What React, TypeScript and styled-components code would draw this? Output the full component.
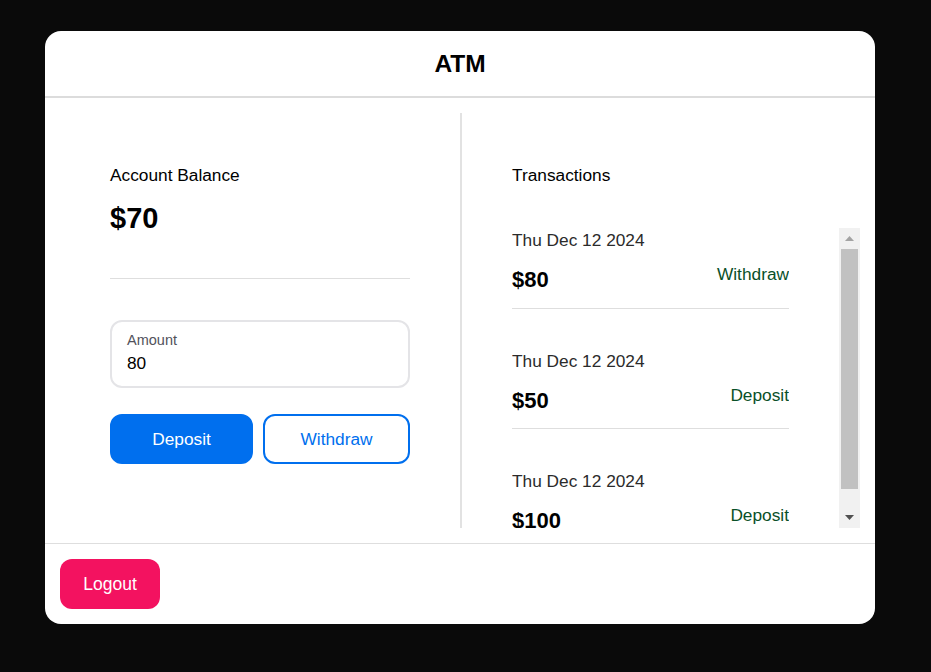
import React from "react";
import styled, { createGlobalStyle } from "styled-components";

const Global = createGlobalStyle`
  html, body { margin: 0; padding: 0; background: #0a0a0a; }
  body { font-family: "Liberation Sans", Arial, sans-serif; color: #000; }
  * { box-sizing: border-box; }
`;

const Page = styled.div`
  padding: 31px 0 0 45px;
  min-height: 672px;
`;

const Card = styled.div`
  width: 830px;
  height: 593px;
  background: #fff;
  border-radius: 16px;
  display: flex;
  flex-direction: column;
  overflow: hidden;
`;

const Header = styled.header`
  height: 67px;
  border-bottom: 2px solid #dcdcdc;
  display: flex;
  align-items: center;
  justify-content: center;
`;

const Title = styled.h1`
  margin: 0;
  font-size: 24.5px;
  font-weight: 700;
`;

const Body = styled.div`
  height: 445px;
  padding: 15px 0;
  display: grid;
  grid-template-columns: 415px 2px 1fr;
`;

const VDivider = styled.div`
  background: #e2e2e2;
  width: 2px;
`;

const LeftCol = styled.section`
  padding: 52px 50px 0 65px;
  display: flex;
  flex-direction: column;
`;

const RightCol = styled.section`
  padding: 52px 15px 0 50px;
  display: flex;
  flex-direction: column;
`;

const Label = styled.div`
  font-size: 17.3px;
  line-height: 20px;
  color: #000;
`;

const Balance = styled.div`
  margin-top: 17px;
  font-size: 29px;
  font-weight: 700;
  line-height: 33px;
`;

const HLine = styled.hr`
  margin: 43px 0 0;
  border: none;
  border-top: 1px solid #dedede;
  height: 0;
`;

const InputBox = styled.label`
  margin-top: 41px;
  height: 68px;
  border: 2px solid #e4e4e7;
  border-radius: 12px;
  padding: 10px 15px 0;
  display: flex;
  flex-direction: column;
  gap: 4px;
`;

const InputLabel = styled.span`
  font-size: 14.5px;
  line-height: 17px;
  color: #52525b;
`;

const InputField = styled.input`
  border: none;
  outline: none;
  padding: 0;
  font-family: inherit;
  font-size: 17.3px;
  line-height: 20px;
  height: 20px;
  color: #000;
  background: transparent;
`;

const ButtonRow = styled.div`
  margin-top: 26px;
  display: grid;
  grid-template-columns: 143fr 147fr;
  gap: 10px;
`;

const ActionButton = styled.button<{ $variant: "solid" | "outline" }>`
  height: 50px;
  border-radius: 12px;
  font-family: inherit;
  font-size: 17.3px;
  cursor: pointer;
  border: 2px solid #006fee;
  background: ${(p) => (p.$variant === "solid" ? "#006fee" : "#fff")};
  color: ${(p) => (p.$variant === "solid" ? "#fff" : "#006fee")};
`;

const ListFrame = styled.div`
  margin-top: 43px;
  height: 300px;
  display: flex;
  gap: 50px;
`;

const ScrollList = styled.div`
  flex: 1;
  overflow-y: auto;
  padding-top: 2px;
  scrollbar-width: none;
  &::-webkit-scrollbar {
    display: none;
  }
`;

const ScrollTrack = styled.div`
  width: 21px;
  background: #f1f1f1;
  display: flex;
  flex-direction: column;
`;

const ScrollButton = styled.div`
  height: 21px;
  display: flex;
  align-items: center;
  justify-content: center;
  flex-shrink: 0;
`;

const ThumbArea = styled.div`
  flex: 1;
  padding: 0 2px;
`;

const Thumb = styled.div`
  background: #c1c1c1;
`;

const Item = styled.div`
  padding-bottom: 15.5px;
  border-bottom: 1px solid #dedede;
  & + & {
    margin-top: 42px;
  }
`;

const DateText = styled.div`
  font-size: 17.3px;
  line-height: 20px;
  color: #2b2b2b;
`;

const ItemRow = styled.div`
  margin-top: 14px;
  display: flex;
  justify-content: space-between;
  align-items: flex-start;
`;

const Amount = styled.div`
  margin-top: 3px;
  font-size: 22px;
  font-weight: 700;
  line-height: 25px;
`;

const Kind = styled.div`
  font-size: 17.3px;
  line-height: 20px;
  color: #095028;
`;

const Footer = styled.footer`
  border-top: 1px solid #dedede;
  height: 81px;
  padding: 15px;
  display: flex;
  align-items: flex-start;
`;

const LogoutButton = styled.button`
  width: 100px;
  height: 50px;
  border: none;
  border-radius: 12px;
  background: #f31260;
  color: #fff;
  font-family: inherit;
  font-size: 17.5px;
  cursor: pointer;
`;

const transactions = [
  { date: "Thu Dec 12 2024", amount: 80, kind: "Withdraw" },
  { date: "Thu Dec 12 2024", amount: 50, kind: "Deposit" },
  { date: "Thu Dec 12 2024", amount: 100, kind: "Deposit" },
];

const Arrow = ({ dir, color }: { dir: "up" | "down"; color: string }) => (
  <svg width="9" height="5" viewBox="0 0 9 5">
    <path d={dir === "up" ? "M0 5h9L4.5 0z" : "M0 0h9L4.5 5z"} fill={color} />
  </svg>
);

export default function App() {
  const visible = 300;
  const total = 323;
  const trackLen = visible - 42;
  const thumbLen = Math.round((trackLen * visible) / total);
  return (
    <>
      <Global />
      <Page>
        <Card>
          <Header>
            <Title>ATM</Title>
          </Header>
          <Body>
            <LeftCol>
              <Label>Account Balance</Label>
              <Balance>$70</Balance>
              <HLine />
              <InputBox>
                <InputLabel>Amount</InputLabel>
                <InputField type="text" defaultValue="80" />
              </InputBox>
              <ButtonRow>
                <ActionButton $variant="solid">Deposit</ActionButton>
                <ActionButton $variant="outline">Withdraw</ActionButton>
              </ButtonRow>
            </LeftCol>
            <VDivider />
            <RightCol>
              <Label>Transactions</Label>
              <ListFrame>
                <ScrollList>
                  {transactions.map((t, i) => (
                    <Item key={i}>
                      <DateText>{t.date}</DateText>
                      <ItemRow>
                        <Amount>${t.amount}</Amount>
                        <Kind>{t.kind}</Kind>
                      </ItemRow>
                    </Item>
                  ))}
                </ScrollList>
                <ScrollTrack>
                  <ScrollButton>
                    <Arrow dir="up" color="#a3a3a3" />
                  </ScrollButton>
                  <ThumbArea>
                    <Thumb style={{ height: thumbLen }} />
                  </ThumbArea>
                  <ScrollButton>
                    <Arrow dir="down" color="#505050" />
                  </ScrollButton>
                </ScrollTrack>
              </ListFrame>
            </RightCol>
          </Body>
          <Footer>
            <LogoutButton>Logout</LogoutButton>
          </Footer>
        </Card>
      </Page>
    </>
  );
}
